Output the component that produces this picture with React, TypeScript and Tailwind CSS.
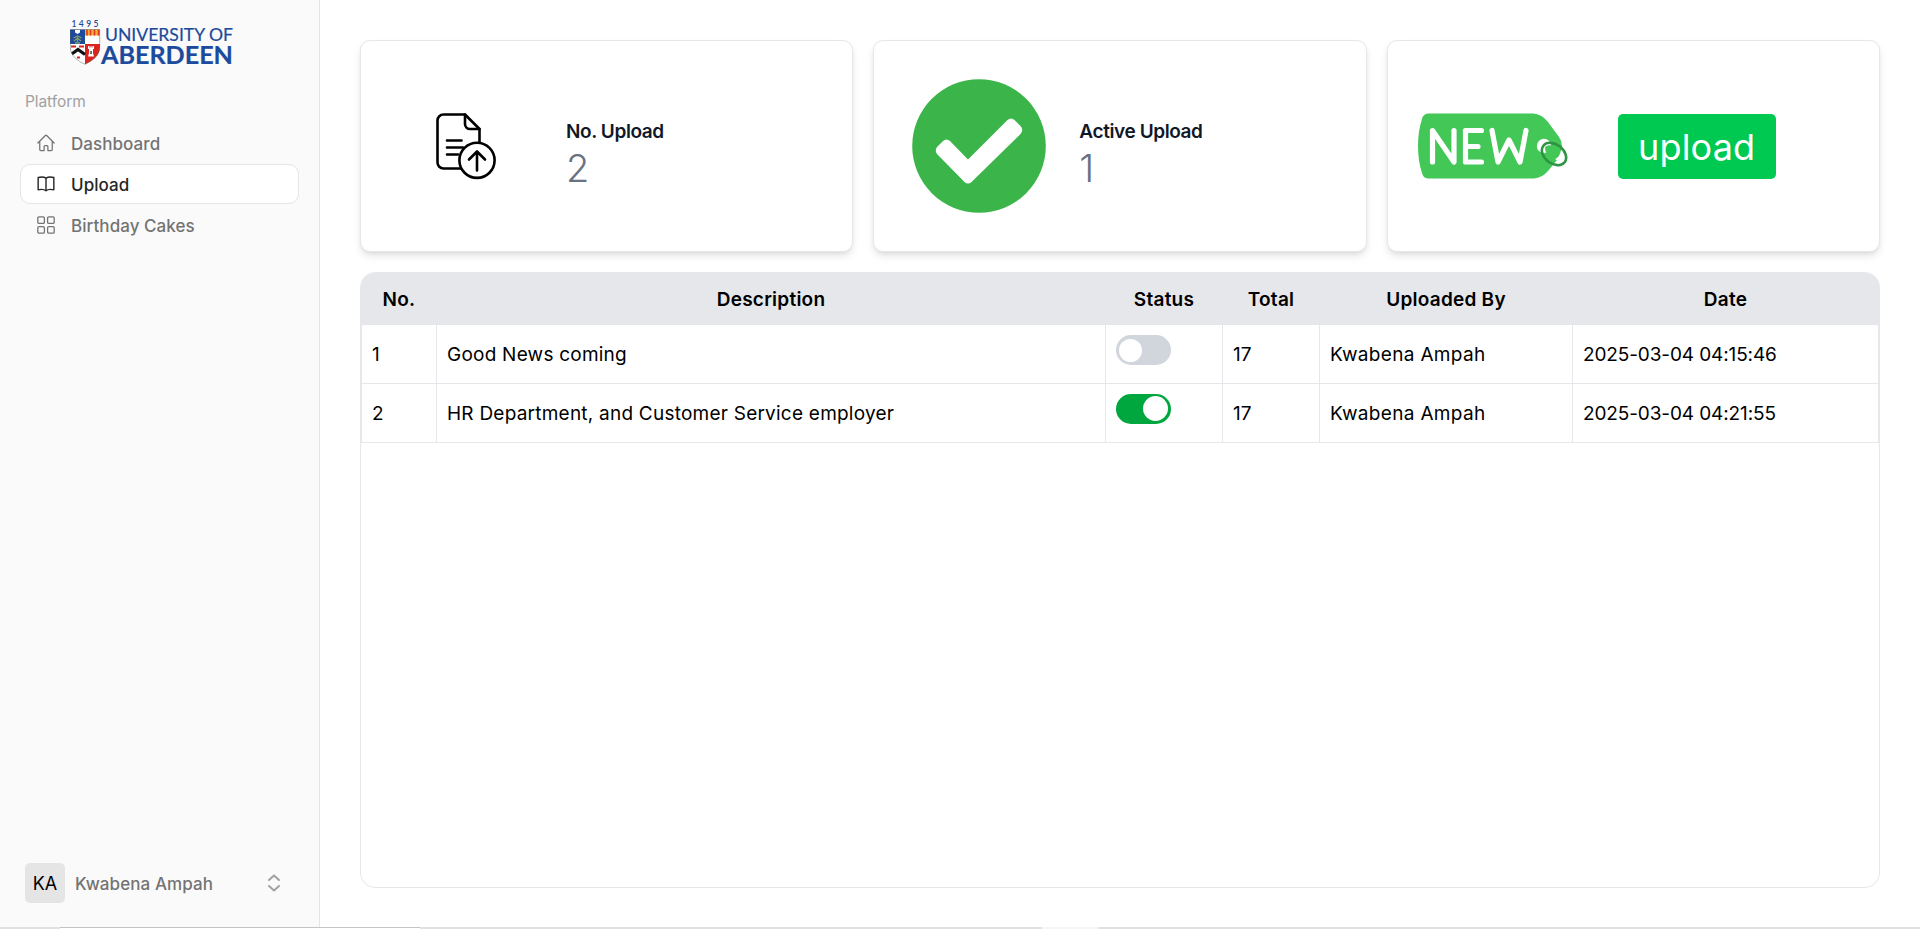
import React from "react";

const rows = [
  { no: "1", description: "Good News coming", active: false, total: "17", by: "Kwabena Ampah", date: "2025-03-04 04:15:46" },
  { no: "2", description: "HR Department, and Customer Service employer", active: true, total: "17", by: "Kwabena Ampah", date: "2025-03-04 04:21:55" },
];

function Logo() {
  return (
    <svg width="166" height="54" viewBox="0 0 166 54" className="block">
      <defs>
        <clipPath id="shield">
          <path d="M0 10.500H30V28C30 37 22 42 15 45.500C8 42 0 37 0 28Z" />
        </clipPath>
      </defs>
      <text x="1.500" y="7.500" fontSize="8.500" fontWeight="600" fill="#1c4a9c" textLength="27" className="font-['Lato',sans-serif]">1495</text>
      <g clipPath="url(#shield)">
        <rect y="10" width="15" height="15" fill="#1c4a9c" />
        <rect x="15" y="10" width="15" height="15" fill="#fff" />
        <rect x="15" y="10" width="15" height="6.500" fill="#f6b434" />
        <path d="M17 10V16.500M20.500 10V16.500M24.500 10V16.500M28.500 10V16.500" stroke="#e0392b" strokeWidth="1.700" />
        <path d="M5 10.500h5v3l-2.500 1.500L5 13.500Z" fill="#fff" />
        <path d="M7.500 17v6M3.500 19l4-2 4 2M4 22l3.500-3 3.500 3M5 24h5" stroke="#7f9a6a" strokeWidth="1.300" fill="none" />
        <rect y="25" width="15" height="21" fill="#fff" />
        <rect x="15" y="25" width="15" height="21" fill="#d9251d" />
        <path d="M1 27.500h5M9 27.500h5M7 38.500h3" stroke="#d9251d" strokeWidth="2" />
        <path d="M1 35.500L8 30.500L15 35.500" stroke="#111" strokeWidth="3.200" fill="none" />
        <path d="M18 27v3h1v4l-1 3.500h6l-1-3.500v-4h1v-3h-1.500v1.500h-1V27h-1v1.500h-1V27Z" fill="#fff" />
        <rect x="20.300" y="32" width="1.500" height="3" fill="#444" />
      </g>
      <path d="M0.300 10.500H29.700V28C29.700 37 22 42 15 45.200C8 42 0.300 37 0.300 28Z" fill="none" stroke="#666" strokeWidth="0.500" />
      <text x="35" y="22.300" fontSize="17" fill="#1c4a9c" stroke="#1c4a9c" strokeWidth="0.200" textLength="128" lengthAdjust="spacingAndGlyphs" className="font-['Lato',sans-serif]">UNIVERSITY OF</text>
      <text x="31" y="45" fontSize="24" fontWeight="700" fill="#1c4a9c" stroke="#1c4a9c" strokeWidth="0.200" textLength="132" lengthAdjust="spacingAndGlyphs" className="font-['Lato',sans-serif]">ABERDEEN</text>
    </svg>
  );
}

function HomeIcon() {
  return (
    <svg width="20" height="20" viewBox="0 0 24 24" fill="none" stroke="currentColor" strokeWidth="1.500" strokeLinecap="round" strokeLinejoin="round">
      <path d="m2.250 12 8.954-8.955c.44-.439 1.152-.439 1.591 0L21.750 12M4.500 9.750v10.125c0 .621.504 1.125 1.125 1.125H9.750v-4.875c0-.621.504-1.125 1.125-1.125h2.250c.621 0 1.125.504 1.125 1.125V21h4.125c.621 0 1.125-.504 1.125-1.125V9.750" />
    </svg>
  );
}

function BookIcon() {
  return (
    <svg width="20" height="20" viewBox="0 0 24 24" fill="none" stroke="currentColor" strokeWidth="1.700" strokeLinecap="round" strokeLinejoin="round">
      <path d="M12 5C10 3.600 6 3.200 2.600 4.200V19C6 18.100 10 18.500 12 20.200M12 5C14 3.600 18 3.200 21.400 4.200V19C18 18.100 14 18.500 12 20.200M12 5V20.200" />
    </svg>
  );
}

function GridIcon() {
  return (
    <svg width="20" height="20" viewBox="0 0 20 20" fill="none" stroke="currentColor" strokeWidth="1.300">
      <rect x="1.800" y="1.800" width="6.600" height="6.600" rx="1.200" />
      <rect x="11.600" y="1.800" width="6.600" height="6.600" rx="1.200" />
      <rect x="1.800" y="11.600" width="6.600" height="6.600" rx="1.200" />
      <rect x="11.600" y="11.600" width="6.600" height="6.600" rx="1.200" />
    </svg>
  );
}

function FileUploadIcon() {
  return (
    <svg width="60" height="67" viewBox="0 0 60 67" fill="none" stroke="#000" strokeWidth="2.600" strokeLinecap="round" strokeLinejoin="round">
      <path d="M26 55.500H7.500a6 6 0 0 1-6-6V7.500a6 6 0 0 1 6-6H29L43.500 16V29" />
      <path d="M29 1.500V11a5 5 0 0 0 5 5h9.500" />
      <path d="M11 27.500h14.500M11 34.500h16M11 41.500h11" />
      <circle cx="41" cy="47.300" r="17.600" fill="#fff" />
      <path d="M41 57.500V38.500M33 46.500L41 38.500L49 46.500" />
    </svg>
  );
}

function CheckBadge() {
  return (
    <svg width="134" height="134" viewBox="0 0 134 134">
      <circle cx="67" cy="67" r="66.800" fill="#3bb54a" />
      <path d="M25 68L31 62Q34.500 59 38 62L56 80.500L95.500 41Q99 38 102.500 41L108.500 47Q112 51 108.500 55L59.500 103Q56 106 52.500 103L25 75Q22.500 71.500 25 68Z" fill="#fff" />
    </svg>
  );
}

function NewTag() {
  return (
    <svg width="150" height="66" viewBox="0 0 150 66" className="block">
      <path d="M10 0.500H115Q124 1 130 9L141 24Q144 28 144 33Q144 41 139 47L130 58Q124 65 116 65.500H10Q5 65 4 60Q0 48 0 33Q0 18 4 6Q5 1 10 0.500Z" fill="#43c757" />
      <g fill="none" stroke="#fff" strokeWidth="5.200" strokeLinecap="round" strokeLinejoin="round">
        <path d="M14.500 49V17.500L36 49V17.500" />
        <path d="M63.500 17.500H47.500V49H63.500M47.500 33.500H60" />
        <path d="M74 17.500L80 49L91 27L102 49L108 17.500" />
      </g>
      <circle cx="126" cy="33" r="7.200" fill="#fff" />
      <path d="M127 34Q133 29 139 38Q140 46 134 47Q127 42 127 34Z" fill="#43c757" />
      <path d="M143 37Q148 42 146 48Q142 50 137 46Q142 44 143 37Z" fill="#fff" />
      <ellipse cx="136" cy="41" rx="13.500" ry="9.500" transform="rotate(38 136 41)" fill="none" stroke="#2e9444" strokeWidth="2.600" />
    </svg>
  );
}

function NavItem({ icon, label, active = false }: { icon: React.ReactNode; label: string; active?: boolean }) {
  return (
    <a
      className={
        active
          ? "flex h-10 items-center rounded-[10px] border border-[#e5e5e5] bg-white pl-[15px] text-[#262626]"
          : "flex h-10 items-center rounded-[10px] border border-transparent pl-[15px] text-[#737373]"
      }
    >
      {icon}
      <span className="ml-[15px] pt-[3px] text-[17px] font-medium tracking-[0.060px]">{label}</span>
    </a>
  );
}

function Toggle({ on }: { on: boolean }) {
  return on ? (
    <div className="flex h-[30px] w-[55px] items-center justify-end rounded-full bg-[#00a63e] pr-[3px]">
      <div className="size-[25px] rounded-full bg-white" />
    </div>
  ) : (
    <div className="flex h-[30px] w-[55px] items-center rounded-full bg-[#d1d5dc] pl-[3px]">
      <div className="mt-px size-[23px] rounded-full bg-white" />
    </div>
  );
}

function Stat({ label, value }: { label: string; value: string }) {
  return (
    <div className="-ml-px pt-[17px]">
      <h2 className="text-[19px] leading-[25px] font-semibold tracking-[-0.400px] text-[#101828]">{label}</h2>
      <p className="mt-[2px] text-[38px] leading-[45px] font-light text-[#6a7282]">{value}</p>
    </div>
  );
}

const card = "flex h-[212px] items-center rounded-[10px] border border-[#e5e7eb] bg-white shadow-[0_5px_8px_-1px_rgba(0,0,0,0.1),0_2px_5px_-2px_rgba(0,0,0,0.1)]";
const cell = "border border-[#e5e7eb] pt-[4px] pr-[10px] pb-0 pl-[10px]";

export default function App() {
  return (
    <div className="flex h-[929px] w-[1920px] flex-col overflow-hidden bg-white font-['Inter','Liberation_Sans',sans-serif] text-black">
      <div className="flex h-[927px]">
        <aside className="flex w-80 shrink-0 flex-col border-r border-[#e4e4e7] bg-[#fafafa] px-5">
          <div className="pt-[19px] pl-[50px]">
            <Logo />
          </div>
          <div className="mt-[16px] pl-[5px] text-[15.500px] leading-[26px] tracking-[-0.080px] text-[#a1a1a1]">Platform</div>
          <nav className="mt-[8px] flex flex-col gap-[1px]">
            <NavItem icon={<HomeIcon />} label="Dashboard" />
            <NavItem icon={<BookIcon />} label="Upload" active />
            <NavItem icon={<GridIcon />} label="Birthday Cakes" />
          </nav>
          <div className="mt-auto mb-6 flex h-10 items-center pr-[18px] pl-[5px]">
            <div className="flex size-10 items-center justify-center rounded-[5px] bg-[#e5e5e5] pt-px text-[18px] text-black">KA</div>
            <span className="ml-[10px] pt-[3px] text-[17px] font-medium tracking-[0.080px] text-[#737373]">Kwabena Ampah</span>
            <svg width="14" height="18" viewBox="0 0 14 18" fill="none" stroke="#a1a1a1" strokeWidth="2" strokeLinecap="round" strokeLinejoin="round" className="ml-auto">
              <path d="M2 6L7 1.500L12 6M2 12L7 16.500L12 12" />
            </svg>
          </div>
        </aside>
        <main className="flex flex-1 flex-col gap-5 px-10 pt-10 pb-[39px]">
          <section className="grid grid-cols-3 gap-5">
            <div className={card}>
              <div className="w-[206px] pl-[75px]">
                <FileUploadIcon />
              </div>
              <Stat label="No. Upload" value="2" />
            </div>
            <div className={card}>
              <div className="w-[206px] pl-[38px]">
                <CheckBadge />
              </div>
              <Stat label="Active Upload" value="1" />
            </div>
            <div className={card}>
              <div className="w-[230px] pl-[30px]">
                <NewTag />
              </div>
              <button className="h-[65px] w-[158px] rounded-[5px] bg-[#00c951] pt-[2px] text-[36px] leading-[60px] tracking-[0.150px] text-white">upload</button>
            </div>
          </section>
          <section className="flex-1 overflow-hidden rounded-[15px] border border-[#e5e7eb]">
            <table className="w-full table-fixed border-collapse text-[19px]">
              <colgroup>
                <col className="w-[75px]" />
                <col className="w-[669px]" />
                <col className="w-[117px]" />
                <col className="w-[97px]" />
                <col className="w-[253px]" />
                <col />
              </colgroup>
              <thead>
                <tr className="h-[51px] bg-[#e5e7eb]">
                  {["No.", "Description", "Status", "Total", "Uploaded By", "Date"].map((h) => (
                    <th key={h} className="border-x border-[#e5e7eb] pt-[4px] font-semibold tracking-[0.250px]">{h}</th>
                  ))}
                </tr>
              </thead>
              <tbody>
                {rows.map((r) => (
                  <tr key={r.no} className="h-[59px]">
                    <td className={cell}>{r.no}</td>
                    <td className={`${cell} tracking-[0.230px]`}>{r.description}</td>
                    <td className={cell}>
                      <div className="-mt-[12px]"><Toggle on={r.active} /></div>
                    </td>
                    <td className={cell}>{r.total}</td>
                    <td className={`${cell} tracking-[0.330px]`}>{r.by}</td>
                    <td className={`${cell} tracking-[-0.120px]`}>{r.date}</td>
                  </tr>
                ))}
              </tbody>
            </table>
          </section>
        </main>
      </div>
      <div className="flex h-[2px] bg-[#e0e0e0]">
        <div className="ml-[60px] w-[360px] border-t border-[#c4c4c4] bg-white" />
        <div className="ml-[622px] w-[57px] bg-[#f4f4f4]" />
      </div>
    </div>
  );
}
